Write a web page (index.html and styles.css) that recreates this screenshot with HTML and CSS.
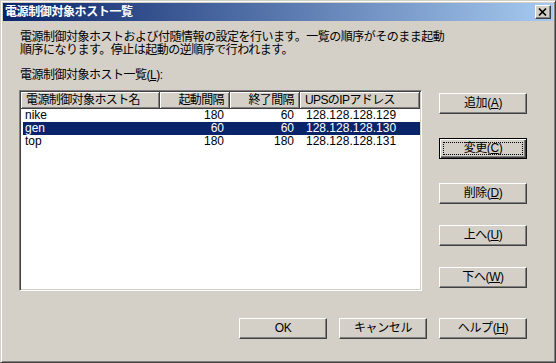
FILE: index.html
```html
<!DOCTYPE html>
<html lang="ja">
<head>
<meta charset="utf-8">
<link rel="stylesheet" href="styles.css">
</head>
<body>
<div class="window">
  <div class="titlebar">
    <span class="title">電源制御対象ホスト一覧</span>
    <span class="close"><svg width="14" height="12" viewBox="0 0 14 12"><path d="M3 2.5 L10 9.5 M10 2.5 L3 9.5" stroke="#000" stroke-width="1.7" fill="none"/></svg></span>
  </div>
  <div class="body">
    <p class="desc">電源制御対象ホストおよび付随情報の設定を行います。一覧の順序がそのまま起動<br>順序になります。停止は起動の逆順序で行われます。</p>
    <div class="label">電源制御対象ホスト一覧(<u>L</u>):</div>
    <div class="main">
      <div class="list">
        <div class="lhead">
          <div class="hc">電源制御対象ホスト名</div>
          <div class="hc right">起動間隔</div>
          <div class="hc right">終了間隔</div>
          <div class="hc">UPSのIPアドレス</div>
        </div>
        <div class="row">
          <div class="cell first">nike</div><div class="cell num">180</div><div class="cell num">60</div><div class="cell ip">128.128.128.129</div>
        </div>
        <div class="row selected">
          <div class="cell first">gen</div><div class="cell num">60</div><div class="cell num">60</div><div class="cell ip">128.128.128.130</div>
        </div>
        <div class="row">
          <div class="cell first">top</div><div class="cell num">180</div><div class="cell num">180</div><div class="cell ip">128.128.128.131</div>
        </div>
      </div>
      <div class="side">
        <div class="btn">追加(<u>A</u>)</div>
        <div class="btn default focus gap-a">変更(<u>C</u>)</div>
        <div class="btn gap-a">削除(<u>D</u>)</div>
        <div class="btn gap-b">上へ(<u>U</u>)</div>
        <div class="btn gap-b">下へ(<u>W</u>)</div>
      </div>
    </div>
    <div class="footer">
      <div class="btn">OK</div>
      <div class="btn">キャンセル</div>
      <div class="btn">ヘルプ(<u>H</u>)</div>
    </div>
  </div>
</div>
</body>
</html>
```
FILE: styles.css
```css
html, body {
  margin: 0;
  padding: 0;
  background: #D4D0C8;
}
body {
  font-family: "Liberation Sans", "Noto Sans CJK JP", sans-serif;
  font-size: 12px;
  color: #000;
}
.window {
  box-sizing: border-box;
  width: 556px;
  height: 363px;
  background: #D4D0C8;
  border: 1px solid;
  border-color: #D4D0C8 #404040 #404040 #D4D0C8;
  box-shadow: inset 1px 1px #fff, inset -1px -1px #808080;
  padding: 2px;
  display: flex;
  flex-direction: column;
}
.titlebar {
  height: 18px;
  background: linear-gradient(to right, #0A246A, #A6CAF0);
  display: flex;
  align-items: center;
  justify-content: space-between;
  flex-shrink: 0;
}
.title {
  color: #fff;
  font-weight: bold;
  padding-left: 2px;
  letter-spacing: -0.4px;
  line-height: 18px;
}
.close {
  box-sizing: border-box;
  width: 16px;
  height: 14px;
  margin-right: 2px;
  background: #D4D0C8;
  border: 1px solid;
  border-color: #fff #404040 #404040 #fff;
  box-shadow: inset -1px -1px #808080;
  display: flex;
}
.close svg { display: block; }
.body {
  padding: 0 26px 0 16px;
  flex: 1;
}
.desc {
  margin: 10px 0 0 1px;
  line-height: 13px;
  letter-spacing: -0.5px;
  white-space: nowrap;
}
.label {
  margin: 12px 0 0 1px;
  line-height: 13px;
  letter-spacing: -0.5px;
}
u { text-underline-offset: 1px; }
.main {
  display: flex;
  margin-top: 8px;
  gap: 17px;
}
.list {
  box-sizing: border-box;
  width: 403px;
  height: 201px;
  background: #fff;
  border: 1px solid;
  border-color: #808080 #fff #fff #808080;
  box-shadow: inset 1px 1px #404040, inset -1px -1px #D4D0C8;
  padding: 1px;
}
.lhead {
  display: grid;
  grid-template-columns: 139px 70px 70px 120px;
  height: 17px;
}
.hc {
  background: #D4D0C8;
  border-right: 1px solid #404040;
  box-shadow: inset 1px 1px #fff, inset -1px -1px #808080;
  border-bottom: 1px solid #404040;
  line-height: 16px;
  padding: 0 5px;
  white-space: nowrap;
  overflow: hidden;
  letter-spacing: -0.6px;
}
.hc.right { text-align: right; }
.row {
  display: grid;
  grid-template-columns: 137px 70px 70px 120px;
  height: 13px;
  line-height: 13px;
  margin-left: 2px;
}
.row.selected {
  background: #0A246A;
  color: #fff;
}
.cell { white-space: nowrap; }
.first { padding-left: 2px; }
.num { text-align: right; padding-right: 6px; }
.ip { padding-left: 6px; }
.side {
  display: flex;
  flex-direction: column;
  padding-top: 3px;
}
.btn {
  box-sizing: border-box;
  position: relative;
  width: 88px;
  height: 21px;
  background: #D4D0C8;
  border: 1px solid;
  border-color: #fff #404040 #404040 #fff;
  box-shadow: inset -1px -1px #808080;
  display: flex;
  align-items: center;
  justify-content: center;
  line-height: 13px;
  letter-spacing: -0.4px;
}
.btn.default {
  border-color: #000;
  box-shadow: inset 1px 1px #fff, inset -1px -1px #404040, inset -2px -2px #808080;
}
.btn.focus::after {
  content: "";
  position: absolute;
  left: 3px;
  top: 3px;
  right: 3px;
  bottom: 3px;
  border: 1px dotted #000;
}
.gap-a { margin-top: 24px; }
.gap-b { margin-top: 21px; }
.footer {
  display: flex;
  justify-content: flex-end;
  gap: 12px;
  margin-top: 27px;
}
```
